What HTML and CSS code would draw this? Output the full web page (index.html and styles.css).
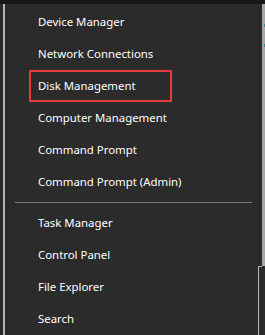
FILE: index.html
```html
<!DOCTYPE html>
<html lang="en">
  <head>
    <meta charset="UTF-8" />
    <meta name="viewport" content="width=device-width, initial-scale=1.0" />
    <title>Quick Link Menu</title>
    <link rel="stylesheet" href="styles.css">
  </head>
  <body>
    <div class="topbar"></div>
    <div class="screen">
      <div class="menu">
        <div class="group">
          <div class="item">Device Manager</div>
          <div class="item">Network Connections</div>
          <div class="item selected">Disk Management</div>
          <div class="item">Computer Management</div>
          <div class="item">Command Prompt</div>
          <div class="item">Command Prompt (Admin)</div>
        </div>
        <div class="separator"></div>
        <div class="group">
          <div class="item">Task Manager</div>
          <div class="item">Control Panel</div>
          <div class="item">File Explorer</div>
          <div class="item">Search</div>
        </div>
      </div>
      <div class="side">
        <div class="scroll">
          <span class="mark"></span>
          <span class="mark"></span>
        </div>
        <div class="window"></div>
      </div>
    </div>
  </body>
</html>
```

FILE: styles.css
```css
body {
  margin: 0;
  padding: 0;
  width: 265px;
  height: 335px;
  overflow: hidden;
  background-color: #2b2b2b;
  font-family: "Noto Sans", "Open Sans", sans-serif;
}
.topbar {
  height: 4px;
  background-color: #17181c;
}
.screen {
  display: flex;
  height: 331px;
}
.menu {
  flex: 1;
  margin-left: 3px;
  border-left: 2px solid #b4b4b4;
  padding-top: 2px;
}
.item {
  height: 32px;
  line-height: 32px;
  padding-left: 33px;
  color: #ffffff;
  font-size: 11.4px;
  white-space: nowrap;
}
.item.selected {
  width: 132px;
  height: 28px;
  line-height: 28px;
  margin-left: 24px;
  padding-left: 7px;
  border: 2px solid #e83a3c;
}
.separator {
  height: 1px;
  margin: 4px 6px 4px 10px;
  background-color: #7a7a7a;
}
.side {
  width: 7px;
  display: flex;
  flex-direction: column;
}
.scroll {
  height: 262px;
  margin-left: 4px;
  background-color: #a6a6a6;
  display: flex;
  flex-direction: column;
  align-items: flex-end;
  padding-top: 20px;
  box-sizing: border-box;
}
.mark {
  width: 1px;
  height: 3px;
  margin-bottom: 17px;
  background-color: #4d7f8e;
}
.window {
  flex: 1;
  border-top: 1px solid #b4b4b4;
  border-left: 1px solid #b4b4b4;
  margin-right: 3px;
}
```
